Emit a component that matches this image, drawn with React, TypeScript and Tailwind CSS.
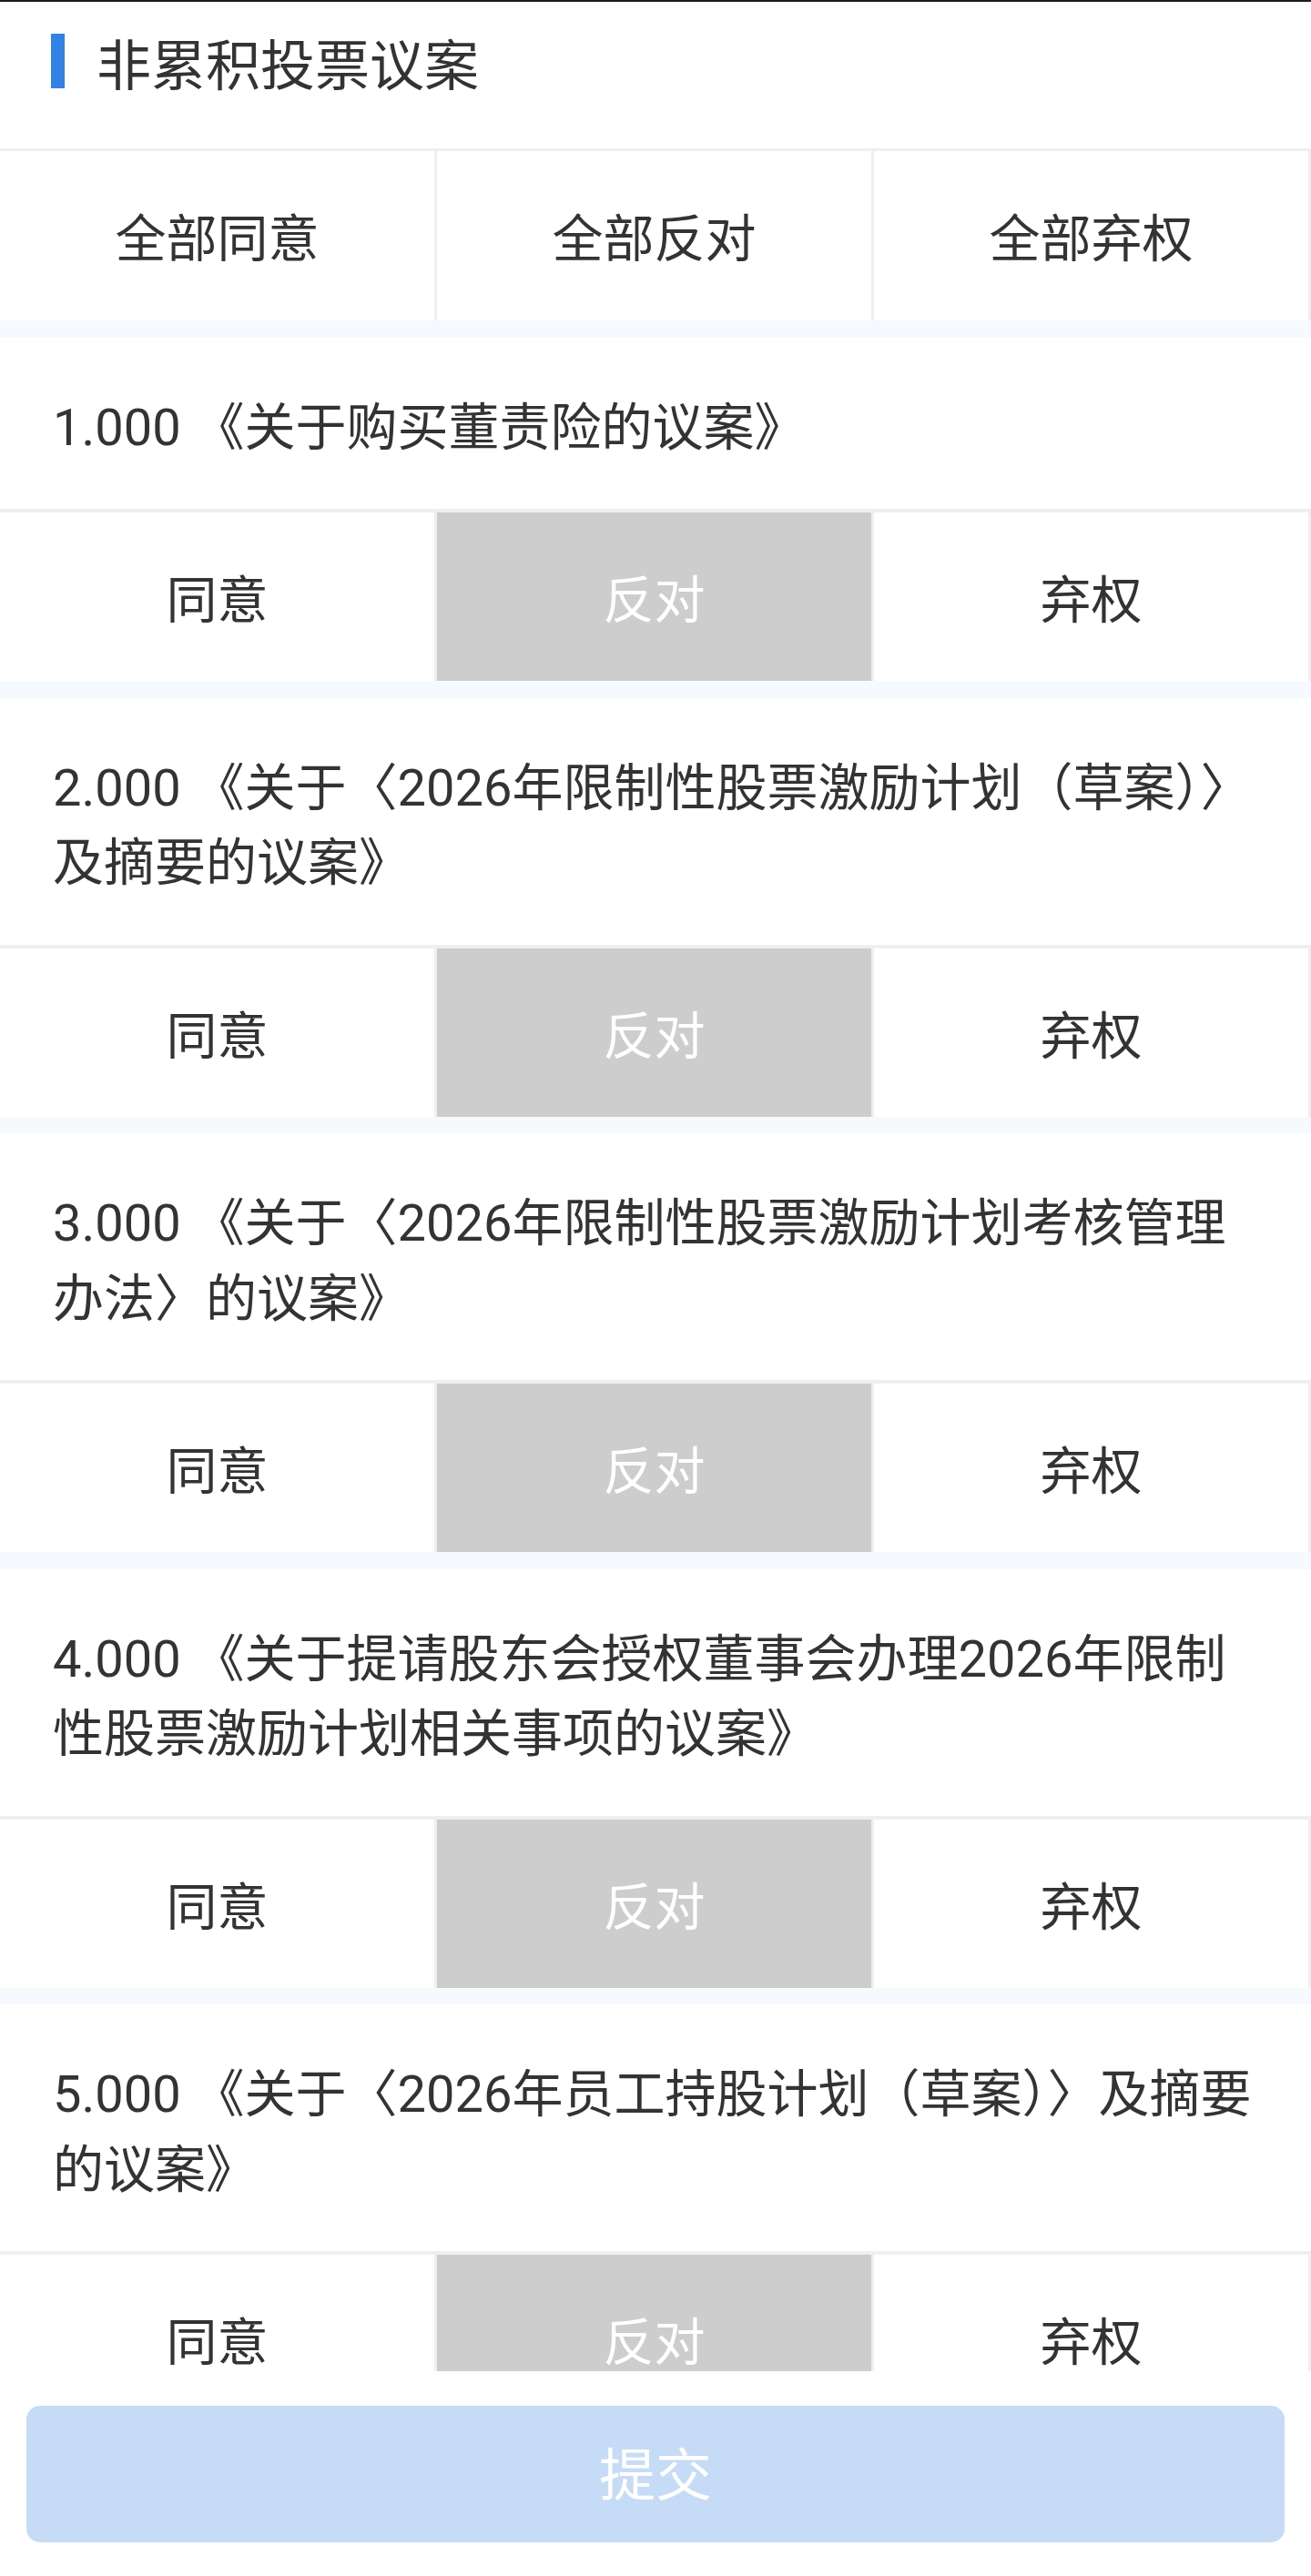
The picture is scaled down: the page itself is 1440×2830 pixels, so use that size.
import React from 'react'

const proposals: string[][] = [
  ['1.000 《关于购买董责险的议案》'],
  ['2.000 《关于〈2026年限制性股票激励计划（草案）〉', '及摘要的议案》'],
  ['3.000 《关于〈2026年限制性股票激励计划考核管理', '办法〉的议案》'],
  ['4.000 《关于提请股东会授权董事会办理2026年限制', '性股票激励计划相关事项的议案》'],
  ['5.000 《关于〈2026年员工持股计划（草案）〉及摘要', '的议案》'],
]

const Gap = () => <div className="h-[18.5px] w-full bg-[#f6f9fd]" />

const VoteRow = ({ labels, picked }: { labels: string[]; picked?: number }) => (
  <div className="grid w-full grid-cols-3 border-t-4 border-[#efefef]">
    {labels.map((label, i) => (
      <div
        key={label}
        className={
          i === picked
            ? 'flex h-[185px] items-center justify-center border-r-[3px] border-[#efefef] bg-[#cdcdcd] pt-[9px] text-[56px] text-white'
            : 'flex h-[185px] items-center justify-center border-r-[3px] border-[#efefef] bg-white pt-[9px] text-[56px] text-[#333333]'
        }
      >
        {label}
      </div>
    ))}
  </div>
)

const App = () => {
  return (
    <div className="flex h-[2830px] w-[1440px] flex-col overflow-hidden bg-white font-['Roboto','Noto_Sans_CJK_SC',sans-serif] text-[#333333]">
      {/* status bar edge */}
      <div className="h-[2px] w-full bg-[#1b1b1b]" />

      {/* scrolling list */}
      <div className="min-h-0 flex-1 overflow-hidden">
        {/* title */}
        <div className="flex h-[161px] items-start pl-[56px] pt-[35px]">
          <div className="flex h-[60px] items-center">
            <div className="h-[60px] w-[15px] bg-[#3182e4]" />
            <div className="ml-[35px] pt-[2px] font-['Noto_Sans_CJK_SC',sans-serif] text-[60px] leading-[60px]">
              非累积投票议案
            </div>
          </div>
        </div>

        {/* vote all */}
        <div className="grid w-full grid-cols-3 border-t-[3px] border-[#efefef]">
          {['全部同意', '全部反对', '全部弃权'].map((label) => (
            <div
              key={label}
              className="flex h-[186px] items-center justify-center border-r-[3px] border-[#efefef] pt-[8px] text-[56px]"
            >
              {label}
            </div>
          ))}
        </div>
        <Gap />

        {/* proposals */}
        {proposals.map((lines, idx) => (
          <div key={idx}>
            <div className="whitespace-nowrap px-[58px] pb-[48px] pt-[58px] text-[56px] leading-[82.5px]">
              {lines.map((line, j) => (
                <div key={j}>{line}</div>
              ))}
            </div>
            <VoteRow labels={['同意', '反对', '弃权']} picked={1} />
            <Gap />
          </div>
        ))}
      </div>

      {/* submit bar */}
      <div className="h-[225px] w-full bg-white px-[29px] py-[38px]">
        <button className="flex h-[150px] w-full items-center justify-center rounded-[15px] bg-[#c6dbf5] pb-[6px] font-['Noto_Sans_CJK_SC',sans-serif] text-[62px] text-white">
          提交
        </button>
      </div>
    </div>
  )
}

export default App
